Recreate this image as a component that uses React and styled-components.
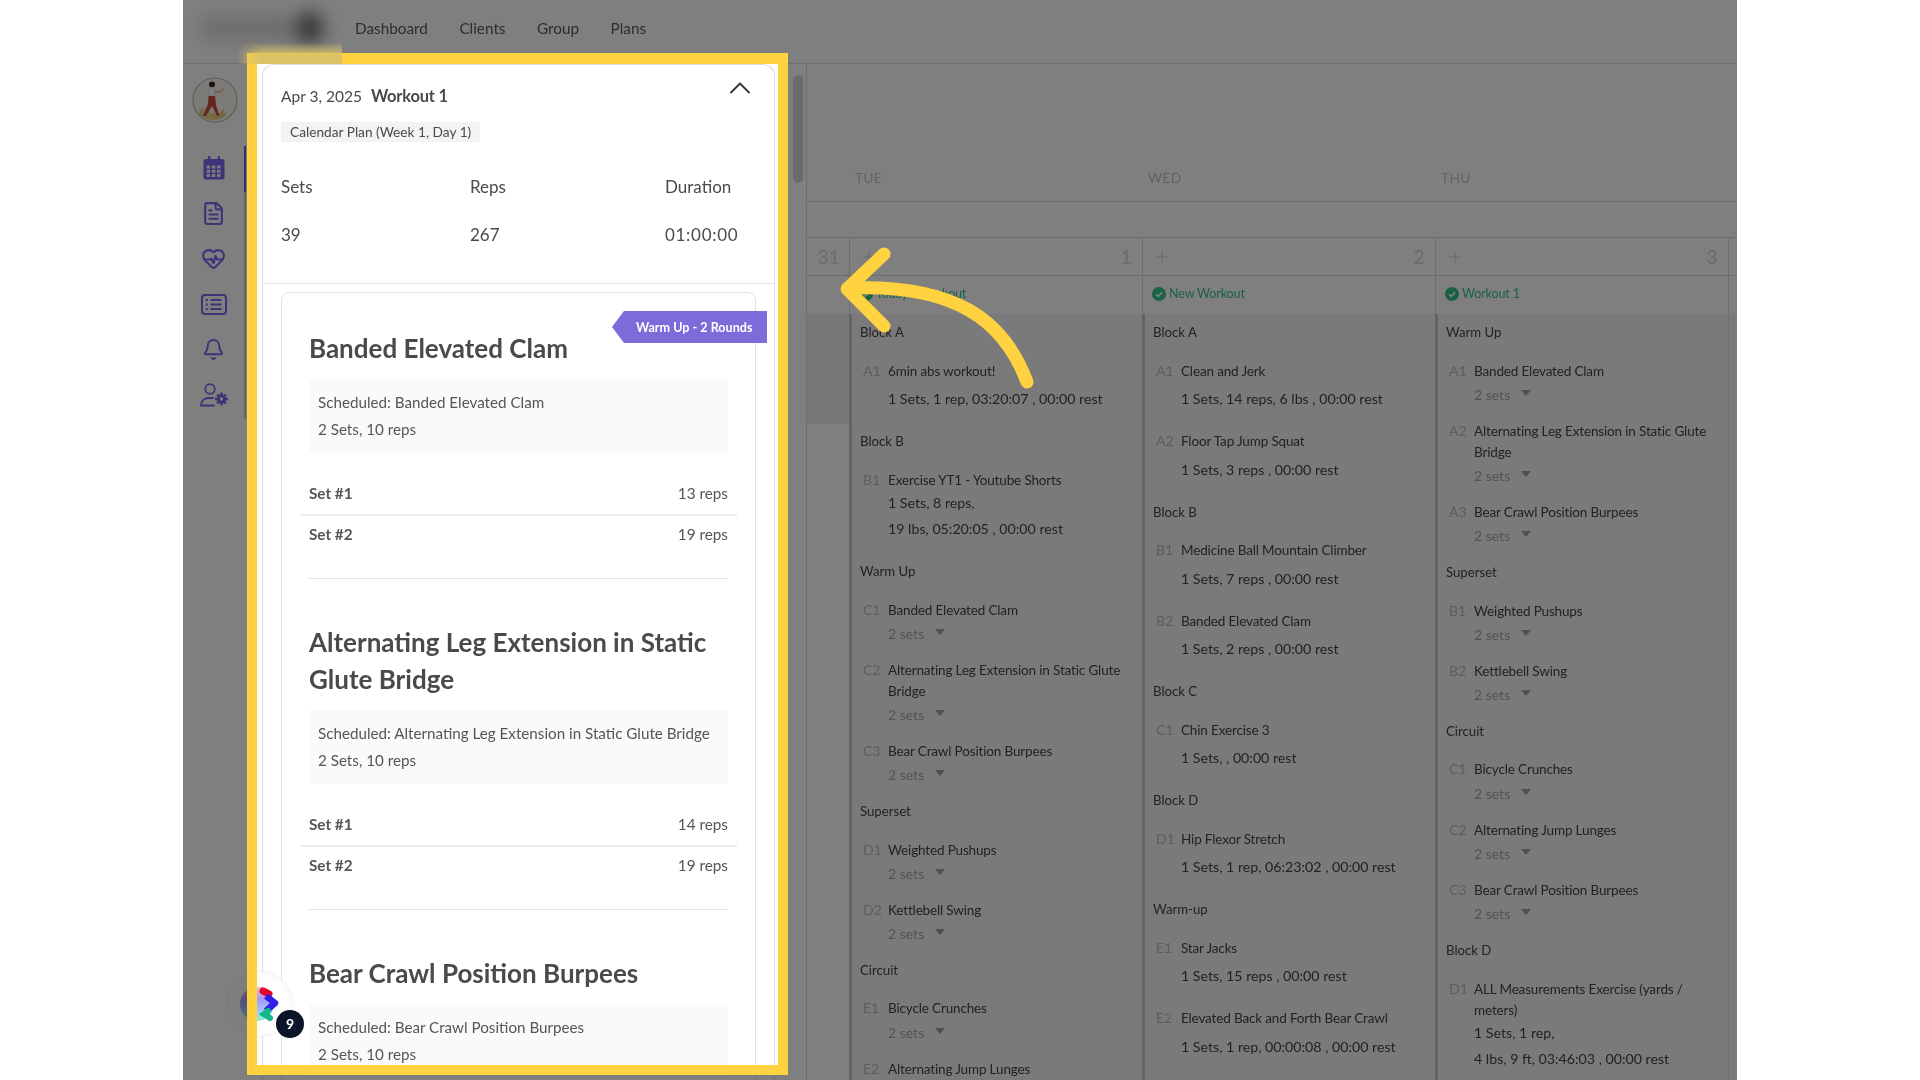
import React from 'react'
import styled, { createGlobalStyle } from 'styled-components'
import { Bell, ChevronUp, FileText, HeartPulse, Plus } from 'lucide-react'

const GlobalStyle = createGlobalStyle`
  html, body { margin: 0; padding: 0; background: #fff; }
  body { font-family: Lato, "Open Sans", sans-serif; overflow: hidden; }
  * { box-sizing: border-box; }
`

const Stage = styled.div`
  position: relative;
  margin-left: 183px;
  width: 1554px;
  height: 1080px;
  overflow: hidden;
  background: #fff;
  filter: blur(0.45px);
`

const TopBar = styled.header`
  display: flex;
  align-items: center;
  height: 64px;
  padding: 0 0 8px 17px;
  border-bottom: 1px solid #dcdcdc;
`

const Logo = styled.div`
  position: relative;
  width: 125px;
  height: 24px;
  margin-right: 30px;
  background: #dadada;
  border-radius: 10px;
  filter: blur(9px);
  &::after {
    content: '';
    position: absolute;
    right: 2px;
    top: -4px;
    width: 26px;
    height: 32px;
    border-radius: 50%;
    background: #666;
  }
`

const NavLink = styled.a`
  margin-right: 31.500px;
  font-size: 15.300px;
  color: #5a5a5a;
`

const Main = styled.div`
  display: flex;
  height: 1016px;
`

const Sidebar = styled.aside`
  display: flex;
  flex-direction: column;
  width: 64px;
  padding-top: 13px;
`

const Avatar = styled.svg`
  display: block;
  width: 46px;
  height: 46px;
  margin: 0 0 23px 9px;
`

const SideNav = styled.nav`
  width: 63px;
`

const SideItem = styled.div`
  display: flex;
  align-items: center;
  justify-content: center;
  height: 45.500px;
  padding-bottom: 2px;
  border-right: 2px solid ${(p) => (p.$active ? '#6a55d8' : '#c8c8c8')};
  color: #7a66f0;
`

const PanelColumn = styled.div`
  display: flex;
  width: 559px;
  padding-left: 15px;
`

const Thumb = styled.div`
  width: 10px;
  height: 108px;
  margin: 11px 0 0 18px;
  border-radius: 5px;
  background: #d4d4d4;
`

const PanelCard = styled.section`
  width: 513px;
  height: 1016px;
  flex-shrink: 0;
  overflow: hidden;
  background: #fff;
  border: 1px solid #ddd;
  border-bottom: 0;
  border-radius: 12px 12px 0 0;
`

const PanelHead = styled.div`
  position: relative;
  padding: 18.500px 18px 36px;
  border-bottom: 1px solid #e3e3e3;
  color: #4a4a4a;
`

const HeadLine = styled.div`
  display: flex;
  align-items: center;
  gap: 9px;
  height: 24px;
`

const HeadDate = styled.span`
  font-size: 15.500px;
`

const HeadTitle = styled.span`
  font-size: 16.500px;
  font-weight: 700;
  letter-spacing: -0.200px;
`

const Collapse = styled(ChevronUp)`
  position: absolute;
  top: 5px;
  right: 16px;
  color: #333;
`

const Tag = styled.div`
  display: inline-block;
  height: 20px;
  margin-top: 14.500px;
  padding: 0 9px;
  background: #f3f3f3;
  font-size: 13.700px;
  line-height: 20px;
`

const Stats = styled.div`
  display: grid;
  grid-template-columns: 189px 195px auto;
  row-gap: 24px;
  margin-top: 33px;
  font-size: 17px;
  line-height: 24px;
`

const DurationValue = styled.span`
  letter-spacing: 0.700px;
`

const ExerciseCard = styled.div`
  position: relative;
  width: 475px;
  margin: 8px 0 0 18px;
  padding: 37px 27px 0;
  border: 1px solid #e3e3e3;
  border-radius: 8px 8px 0 0;
`

const RoundBadge = styled.div`
  position: absolute;
  top: 18px;
  right: -12px;
  width: 155px;
  height: 32px;
  padding-left: 24px;
  background: #7b6cd9;
  clip-path: polygon(12px 0, 100% 0, 100% 100%, 12px 100%, 0 50%);
  color: #fff;
  font-size: 12.600px;
  font-weight: 700;
  line-height: 33px;
  white-space: nowrap;
`

const Exercise = styled.div`
  padding-bottom: 34px;
  margin-bottom: 45px;
  border-bottom: 1px solid #e3e3e3;
`

const ExerciseTitle = styled.h3`
  margin: 0 0 12px;
  font-size: 26px;
  font-weight: 700;
  line-height: 37px;
  color: #4a4a4a;
`

const Scheduled = styled.div`
  height: 74px;
  margin-bottom: 18px;
  padding: 10px 9px;
  background: #fafafa;
  font-size: 15.200px;
  line-height: 27px;
  color: #555;
`

const SetRow = styled.div`
  display: flex;
  justify-content: space-between;
  margin: 0 -9px;
  padding: 12px 9px 11px;
  font-size: 15.300px;
  line-height: 20px;
  color: #555;
  & + & {
    padding: 8px 9px 0;
    border-top: 2px solid #ececec;
  }
`

const SetName = styled.b`
  font-weight: 700;
`

const Bubble = styled.div`
  position: absolute;
  left: ${(p) => p.$x}px;
  top: ${(p) => p.$y}px;
  display: flex;
  align-items: center;
  justify-content: center;
  width: 64px;
  height: 64px;
  border-radius: 50%;
  background: #fdfdfe;
  box-shadow: 0 0 3px rgba(0, 0, 0, 0.12);
`

const Dim = styled.div`
  position: absolute;
  inset: 0;
  background: rgba(0, 0, 0, 0.5);
`

const Highlight = styled.div`
  position: absolute;
  left: 74px;
  top: 64px;
  width: 521px;
  height: 1001px;
  padding-left: 5px;
  overflow: hidden;
  background: #fff;
`

const Frame = styled.div`
  position: absolute;
  left: 64px;
  top: 53px;
  width: 541px;
  height: 1022px;
  border: 10px solid #ffd23f;
  border-top-width: 11px;
`

const Smudge = styled.div`
  position: absolute;
  left: 54px;
  top: 42px;
  width: 105px;
  height: 22px;
  background: linear-gradient(to top, #dcc266 35%, rgba(220, 194, 102, 0));
  mask-image: linear-gradient(to right, transparent, #000 22%);
`

const CountBadge = styled.div`
  position: absolute;
  left: 93px;
  top: 1010px;
  width: 28px;
  height: 28px;
  border-radius: 50%;
  background: #0b1428;
  color: #fff;
  font-size: 14px;
  font-weight: 700;
  line-height: 28px;
  text-align: center;
`

const Arrow = styled.svg`
  position: absolute;
  left: 647px;
  top: 240px;
  width: 210px;
  height: 160px;
`

const Calendar = styled.div`
  flex: 1;
  min-width: 0;
  border-left: 1px solid #dcdcdc;
`

const CalRow = styled.div`
  display: grid;
  grid-template-columns: 42px repeat(4, 293px) 60px;
  height: ${(p) => p.$h}px;
  border-bottom: ${(p) => (p.$line ? '1px solid #d8d8d8' : '0')};
`

const DayCell = styled.div`
  align-self: end;
  padding: 0 0 13px 6px;
  font-size: 13.700px;
  line-height: 20px;
  color: #c4c4c4;
  letter-spacing: 0.300px;
`

const DateCell = styled.div`
  display: flex;
  align-items: center;
  justify-content: space-between;
  padding: 0 10.500px;
  border-left: ${(p) => (p.$first ? '0' : '1px solid #dcdcdc')};
  font-size: 19px;
  color: #d6d6d6;
`

const AddIcon = styled(Plus)`
  margin-left: -2px;
`

const TitleCell = styled.div`
  display: flex;
  align-items: center;
  gap: 3px;
  padding: 0 0 3px 9px;
  border-left: ${(p) => (p.$first ? '0' : '1px solid #dcdcdc')};
  font-size: 12.600px;
  letter-spacing: -0.150px;
  color: #35c488;
`

const BodyRow = styled.div`
  display: grid;
  grid-template-columns: 42px repeat(4, 293px) 60px;
  height: 767px;
`

const SpareCell = styled.div`
  height: 110px;
  background: #eeeeee;
`

const BodyCell = styled.div`
  padding: 8px 8px 0 8px;
  background: #f4f4f4;
  border-left: ${(p) => (p.$thin ? '1px solid #dedede' : '3px solid #c8c8c8')};
`

const GroupTitle = styled.div`
  margin-bottom: 18.500px;
  font-size: 13.200px;
  line-height: 20px;
  color: #444;
`

const Item = styled.div`
  display: grid;
  grid-template-columns: 25px 1fr;
  margin-left: 3px;
  padding-bottom: ${(p) => (p.$sets ? 15.700 : 22)}px;
`

const ItemCode = styled.span`
  font-size: 14px;
  line-height: 19px;
  color: #bbb;
`

const ItemName = styled.div`
  max-width: 238px;
  font-size: 13.500px;
  letter-spacing: -0.150px;
  line-height: 21px;
  color: #444;
`

const Detail = styled.div`
  margin-top: ${(p) => (p.$tight ? 2.500 : 7.500)}px;
  font-size: 14.200px;
  line-height: 20px;
  color: #444;
  & + & { margin-top: 6px; }
`

const SetsToggle = styled.div`
  display: flex;
  align-items: center;
  gap: 11px;
  margin-top: 3.500px;
  font-size: 14px;
  line-height: 20px;
  color: #a8a8a8;
  &::after {
    content: '';
    margin-top: -4px;
    border: 5.500px solid transparent;
    border-top: 6px solid #a0a0a0;
    border-bottom: 0;
  }
`

const CheckDot = styled.svg`
  width: 14px;
  height: 14px;
  flex-shrink: 0;
`

const Check = () => (
  <CheckDot viewBox="0 0 14 14">
    <circle cx="7" cy="7" r="7" fill="#35c488" />
    <path d="M4 7.200l2.200 2.200L10 5.400" fill="none" stroke="#fff" strokeWidth="1.600" />
  </CheckDot>
)

const CalendarIcon = () => (
  <svg width="22" height="24" viewBox="0 0 22 24" fill="currentColor">
    <rect x="5" y="0" width="2.400" height="5" rx="1" />
    <rect x="14.600" y="0" width="2.400" height="5" rx="1" />
    <path d="M3 3h16a2.500 2.500 0 0 1 2.500 2.500V21a2.500 2.500 0 0 1-2.500 2.500H3A2.500 2.500 0 0 1 .5 21V5.500A2.500 2.500 0 0 1 3 3z" />
    <g fill="#f4f4f4">
      {[3.500, 8.800, 14].map((x) => [9.500, 13.800, 18].map((y) => (
        <rect key={`${x}-${y}`} x={x} y={y} width="3.600" height="3" />
      )))}
    </g>
  </svg>
)

const ListIcon = () => (
  <svg width="26" height="21" viewBox="0 0 26 21" fill="none" stroke="currentColor" strokeWidth="2">
    <rect x="1" y="1" width="24" height="19" rx="3" />
    <path d="M9.500 6h11M9.500 10.500h11M9.500 15h11" />
    <path d="M4.800 6h2M4.800 10.500h2M4.800 15h2" />
  </svg>
)

const UserGearIcon = () => (
  <svg width="28" height="24" viewBox="0 0 28 24" fill="none" stroke="currentColor" strokeWidth="1.800">
    <circle cx="10" cy="6" r="4.800" />
    <path d="M1 22.500c0-4.500 3-7.500 8-7.500h4M1 22.500h13" strokeLinecap="round" />
    <circle cx="21.500" cy="16" r="3.200" strokeWidth="3" />
    <path d="M21.500 9.500v3M21.500 19.500v3M15 16h3M25 16h3M17 11.500l2 2M24 18.500l2 2M26 11.500l-2 2M19 18.500l-2 2" strokeWidth="2.400" />
  </svg>
)

const WalkerAvatar = () => (
  <Avatar viewBox="0 0 46 46">
    <circle cx="23" cy="23" r="22" fill="#f8f6f1" stroke="#b8b8b8" strokeWidth="1.200" />
    <path d="M7 37l3-8 2 5 3-4 3 6h10l3-5 3 7c-6 7-21 7-27-1z" fill="#ecd58a" />
    <circle cx="20" cy="7.500" r="3" fill="#33262a" />
    <path d="M17 11c2-1 5-1 6 0l0 8h-6.500z" fill="#fdfdfd" stroke="#e2d6d2" strokeWidth=".5" />
    <path d="M22.500 14.500l5 .5 4-3" fill="none" stroke="#e8a78c" strokeWidth="1.500" />
    <path d="M16.500 19h6.500l1 9 3.500 11h-2.500l-5-10-6 10h-3l5-12z" fill="#cf4a43" />
  </Avatar>
)

const BubbleMark = () => (
  <svg width="40" height="40" viewBox="0 0 40 40">
    <defs>
      <linearGradient id="disc" x1="0" y1="0" x2="0" y2="1">
        <stop offset="0" stopColor="#ffb6c4" />
        <stop offset="0.35" stopColor="#a398ff" />
        <stop offset="0.7" stopColor="#a5c8ff" />
        <stop offset="1" stopColor="#8ef0c6" />
      </linearGradient>
    </defs>
    <circle cx="17" cy="20" r="17" fill="url(#disc)" />
    <path d="M23 7l6 3" stroke="#e3052b" strokeWidth="7" strokeLinecap="round" />
    <path d="M26 12l9 7-9 8" fill="none" stroke="#3320e8" strokeWidth="6.500" strokeLinejoin="round" />
    <path d="M28 27l-4 3 6 4" fill="none" stroke="#12b78c" strokeWidth="6" strokeLinecap="round" />
  </svg>
)

const exercises = [
  { title: 'Banded Elevated Clam', reps: [13, 19] },
  { title: 'Alternating Leg Extension in Static Glute Bridge', reps: [14, 19] },
  { title: 'Bear Crawl Position Burpees', reps: [] },
]

const Panel = () => (
  <PanelCard>
    <PanelHead>
      <HeadLine>
        <HeadDate>Apr 3, 2025</HeadDate>
        <HeadTitle>Workout 1</HeadTitle>
      </HeadLine>
      <Collapse size={36} strokeWidth={1.200} />
      <Tag>Calendar Plan (Week 1, Day 1)</Tag>
      <Stats>
        <span>Sets</span><span>Reps</span><span>Duration</span>
        <span>39</span><span>267</span><DurationValue>01:00:00</DurationValue>
      </Stats>
    </PanelHead>
    <ExerciseCard>
      <RoundBadge>Warm Up - 2 Rounds</RoundBadge>
      {exercises.map((e) => (
        <Exercise key={e.title}>
          <ExerciseTitle>{e.title}</ExerciseTitle>
          <Scheduled>Scheduled: {e.title}<br />2 Sets, 10 reps</Scheduled>
          {e.reps.map((r, i) => (
            <SetRow key={i}>
              <SetName>Set #{i + 1}</SetName>
              <span>{r} reps</span>
            </SetRow>
          ))}
        </Exercise>
      ))}
    </ExerciseCard>
  </PanelCard>
)

const s = (code, name) => ({ code, name, sets: true })
const d = (code, name, ...lines) => ({ code, name, lines })

const columns = [
  {
    date: 1, title: "Today's Workout", groups: [
      ['Block A', [d('A1', '6min abs workout!', '1 Sets, 1 rep, 03:20:07 , 00:00 rest')]],
      ['Block B', [d('B1', 'Exercise YT1 - Youtube Shorts', '1 Sets, 8 reps,', '19 lbs, 05:20:05 , 00:00 rest')]],
      ['Warm Up', [s('C1', 'Banded Elevated Clam'), s('C2', 'Alternating Leg Extension in Static Glute Bridge'), s('C3', 'Bear Crawl Position Burpees')]],
      ['Superset', [s('D1', 'Weighted Pushups'), s('D2', 'Kettlebell Swing')]],
      ['Circuit', [s('E1', 'Bicycle Crunches'), s('E2', 'Alternating Jump Lunges')]],
    ],
  },
  {
    date: 2, title: 'New Workout', groups: [
      ['Block A', [d('A1', 'Clean and Jerk', '1 Sets, 14 reps, 6 lbs , 00:00 rest'), d('A2', 'Floor Tap Jump Squat', '1 Sets, 3 reps , 00:00 rest')]],
      ['Block B', [d('B1', 'Medicine Ball Mountain Climber', '1 Sets, 7 reps , 00:00 rest'), d('B2', 'Banded Elevated Clam', '1 Sets, 2 reps , 00:00 rest')]],
      ['Block C', [d('C1', 'Chin Exercise 3', '1 Sets, , 00:00 rest')]],
      ['Block D', [d('D1', 'Hip Flexor Stretch', '1 Sets, 1 rep, 06:23:02 , 00:00 rest')]],
      ['Warm-up', [d('E1', 'Star Jacks', '1 Sets, 15 reps , 00:00 rest'), d('E2', 'Elevated Back and Forth Bear Crawl', '1 Sets, 1 rep, 00:00:08 , 00:00 rest')]],
    ],
  },
  {
    date: 3, title: 'Workout 1', groups: [
      ['Warm Up', [s('A1', 'Banded Elevated Clam'), s('A2', 'Alternating Leg Extension in Static Glute Bridge'), s('A3', 'Bear Crawl Position Burpees')]],
      ['Superset', [s('B1', 'Weighted Pushups'), s('B2', 'Kettlebell Swing')]],
      ['Circuit', [s('C1', 'Bicycle Crunches'), s('C2', 'Alternating Jump Lunges'), s('C3', 'Bear Crawl Position Burpees')]],
      ['Block D', [d('D1', 'ALL Measurements Exercise (yards / meters)', '1 Sets, 1 rep,', '4 lbs, 9 ft, 03:46:03 , 00:00 rest')]],
    ],
  },
]

const CalendarItem = ({ item }) => (
  <Item $sets={item.sets}>
    <ItemCode>{item.code}</ItemCode>
    <div>
      <ItemName>{item.name}</ItemName>
      {item.sets && <SetsToggle>2 sets</SetsToggle>}
      {item.lines && item.lines.map((line) => (
        <Detail key={line} $tight={item.lines.length > 1}>{line}</Detail>
      ))}
    </div>
  </Item>
)

const CalendarGrid = () => (
  <Calendar>
    <CalRow $h={138} $line>
      <span />
      <DayCell>TUE</DayCell>
      <DayCell>WED</DayCell>
      <DayCell>THU</DayCell>
      <span />
      <DayCell>FRI</DayCell>
    </CalRow>
    <CalRow $h={36} $line />
    <CalRow $h={38} $line>
      <DateCell $first><span /><span>31</span></DateCell>
      {columns.map((c) => (
        <DateCell key={c.date}><AddIcon size={20} strokeWidth={1.300} /><span>{c.date}</span></DateCell>
      ))}
      <DateCell />
    </CalRow>
    <CalRow $h={38}>
      <TitleCell $first />
      {columns.map((c) => (
        <TitleCell key={c.date}><Check />{c.title}</TitleCell>
      ))}
      <TitleCell />
    </CalRow>
    <BodyRow>
      <SpareCell />
      {columns.map((c) => (
        <BodyCell key={c.date}>
          {c.groups.map(([name, items]) => (
            <div key={name}>
              <GroupTitle>{name}</GroupTitle>
              {items.map((item) => <CalendarItem key={item.code} item={item} />)}
            </div>
          ))}
        </BodyCell>
      ))}
      <BodyCell $thin />
    </BodyRow>
  </Calendar>
)

export default function App() {
  return (
    <>
      <GlobalStyle />
      <Stage>
        <TopBar>
          <Logo />
          <NavLink>Dashboard</NavLink>
          <NavLink>Clients</NavLink>
          <NavLink>Group</NavLink>
          <NavLink>Plans</NavLink>
        </TopBar>
        <Main>
          <Sidebar>
            <WalkerAvatar />
            <SideNav>
              <SideItem $active><CalendarIcon /></SideItem>
              <SideItem><FileText size={25} strokeWidth={2} /></SideItem>
              <SideItem><HeartPulse size={25} strokeWidth={2} /></SideItem>
              <SideItem><ListIcon /></SideItem>
              <SideItem><Bell size={23} strokeWidth={2} /></SideItem>
              <SideItem><UserGearIcon /></SideItem>
            </SideNav>
          </Sidebar>
          <PanelColumn>
            <Panel />
            <Thumb />
          </PanelColumn>
          <CalendarGrid />
        </Main>
        <Bubble $x={45} $y={972}><BubbleMark /></Bubble>
        <Dim />
        <Highlight>
          <Panel />
          <Bubble $x={-29} $y={908}><BubbleMark /></Bubble>
        </Highlight>
        <Frame />
        <Smudge />
        <CountBadge>9</CountBadge>
        <Arrow viewBox="830 240 210 160">
          <g fill="none" stroke="#ffd23f" strokeWidth="13" strokeLinecap="round" strokeLinejoin="round">
            <path d="M1027 382C1004 320 955 284 850 288" />
            <path d="M884 254L847 289L884 326" />
          </g>
        </Arrow>
      </Stage>
    </>
  )
}
